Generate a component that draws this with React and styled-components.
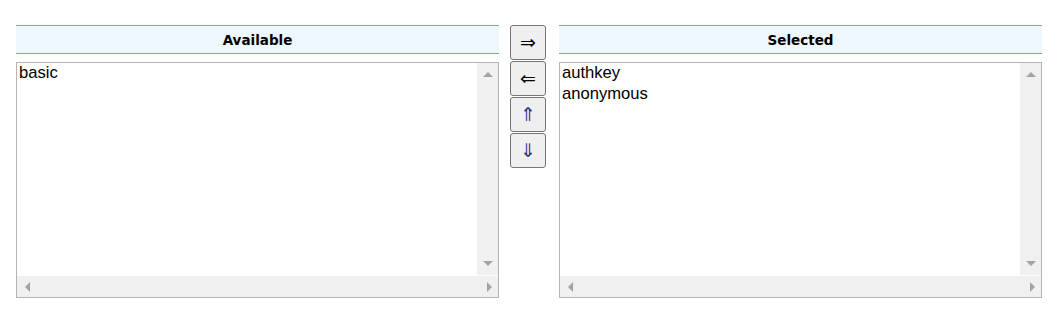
import React from "react";
import styled, { createGlobalStyle } from "styled-components";

const Global = createGlobalStyle`
  html, body { margin: 0; padding: 0; background: #ffffff; }
  body { font-family: "Liberation Sans", Arial, sans-serif; }
`;

const Page = styled.div`
  display: flex;
  align-items: flex-start;
  padding: 25px 20px 0 16px;
  width: 1062px;
  box-sizing: border-box;
`;

const Panel = styled.div`
  display: flex;
  flex-direction: column;
  width: 484px;
  gap: 8px;
`;

const Header = styled.div`
  height: 27px;
  border-top: 1px solid #7aa2d3;
  border-bottom: 1px solid #7aa2d3;
  background: #eef6fe;
  display: flex;
  align-items: center;
  justify-content: center;
  font-family: "DejaVu Sans", Verdana, sans-serif;
  font-weight: bold;
  font-size: 13.5px;
  color: #000;
`;

const ListBox = styled.div`
  height: 236px;
  box-sizing: border-box;
  border: 1px solid #b4b4b4;
  display: grid;
  grid-template-columns: 1fr 21px;
  grid-template-rows: 1fr 21px;
  row-gap: 1px;
  background: #fff;
`;

const Items = styled.ul`
  list-style: none;
  margin: 0;
  padding: 0 0 0 2px;
  overflow: hidden;
`;

const Item = styled.li`
  font-family: "Liberation Sans", Arial, sans-serif;
  font-size: 16.6px;
  line-height: 19px;
  height: 21px;
  color: #000;
  white-space: nowrap;
`;

const VTrack = styled.div`
  background: #f0f0f0;
  display: flex;
  flex-direction: column;
  justify-content: space-between;
  align-items: center;
  padding: 9px 0 9px;
`;

const HTrack = styled.div`
  grid-column: 1 / span 2;
  background: #f0f0f0;
  display: flex;
  justify-content: space-between;
  align-items: center;
  padding: 0 6px 0 8px;
`;

const Tri = styled.span`
  width: 0;
  height: 0;
  display: block;
  ${({ $dir }) =>
    $dir === "up"
      ? "border-left: 5px solid transparent; border-right: 5px solid transparent; border-bottom: 5px solid #a3a3a3;"
      : $dir === "down"
      ? "border-left: 5px solid transparent; border-right: 5px solid transparent; border-top: 5px solid #a3a3a3;"
      : $dir === "left"
      ? "border-top: 5px solid transparent; border-bottom: 5px solid transparent; border-right: 5px solid #a3a3a3;"
      : "border-top: 5px solid transparent; border-bottom: 5px solid transparent; border-left: 5px solid #a3a3a3;"}
`;

const Buttons = styled.div`
  display: flex;
  flex-direction: column;
  gap: 1px;
  margin: 0 13px 0 11px;
`;

const MoveButton = styled.button`
  width: 36px;
  height: 35px;
  box-sizing: border-box;
  border: 1px solid #767676;
  border-radius: 3px;
  background: #efefef;
  padding: 0;
  display: flex;
  align-items: center;
  justify-content: center;
  font-family: "DejaVu Sans", sans-serif;
  font-size: 19px;
  line-height: 1;
  color: ${({ $blue }) => ($blue ? "#1d3f86" : "#000")};
  cursor: default;
`;

function List({ title, items }) {
  return (
    <Panel>
      <Header>{title}</Header>
      <ListBox>
        <Items>
          {items.map((it) => (
            <Item key={it}>{it}</Item>
          ))}
        </Items>
        <VTrack>
          <Tri $dir="up" />
          <Tri $dir="down" />
        </VTrack>
        <HTrack>
          <Tri $dir="left" />
          <Tri $dir="right" />
        </HTrack>
      </ListBox>
    </Panel>
  );
}

export default function App() {
  return (
    <>
      <Global />
      <Page>
        <List title="Available" items={["basic"]} />
        <Buttons>
          <MoveButton>⇒</MoveButton>
          <MoveButton>⇐</MoveButton>
          <MoveButton $blue>⇑</MoveButton>
          <MoveButton $blue>⇓</MoveButton>
        </Buttons>
        <List title="Selected" items={["authkey", "anonymous"]} />
      </Page>
    </>
  );
}
